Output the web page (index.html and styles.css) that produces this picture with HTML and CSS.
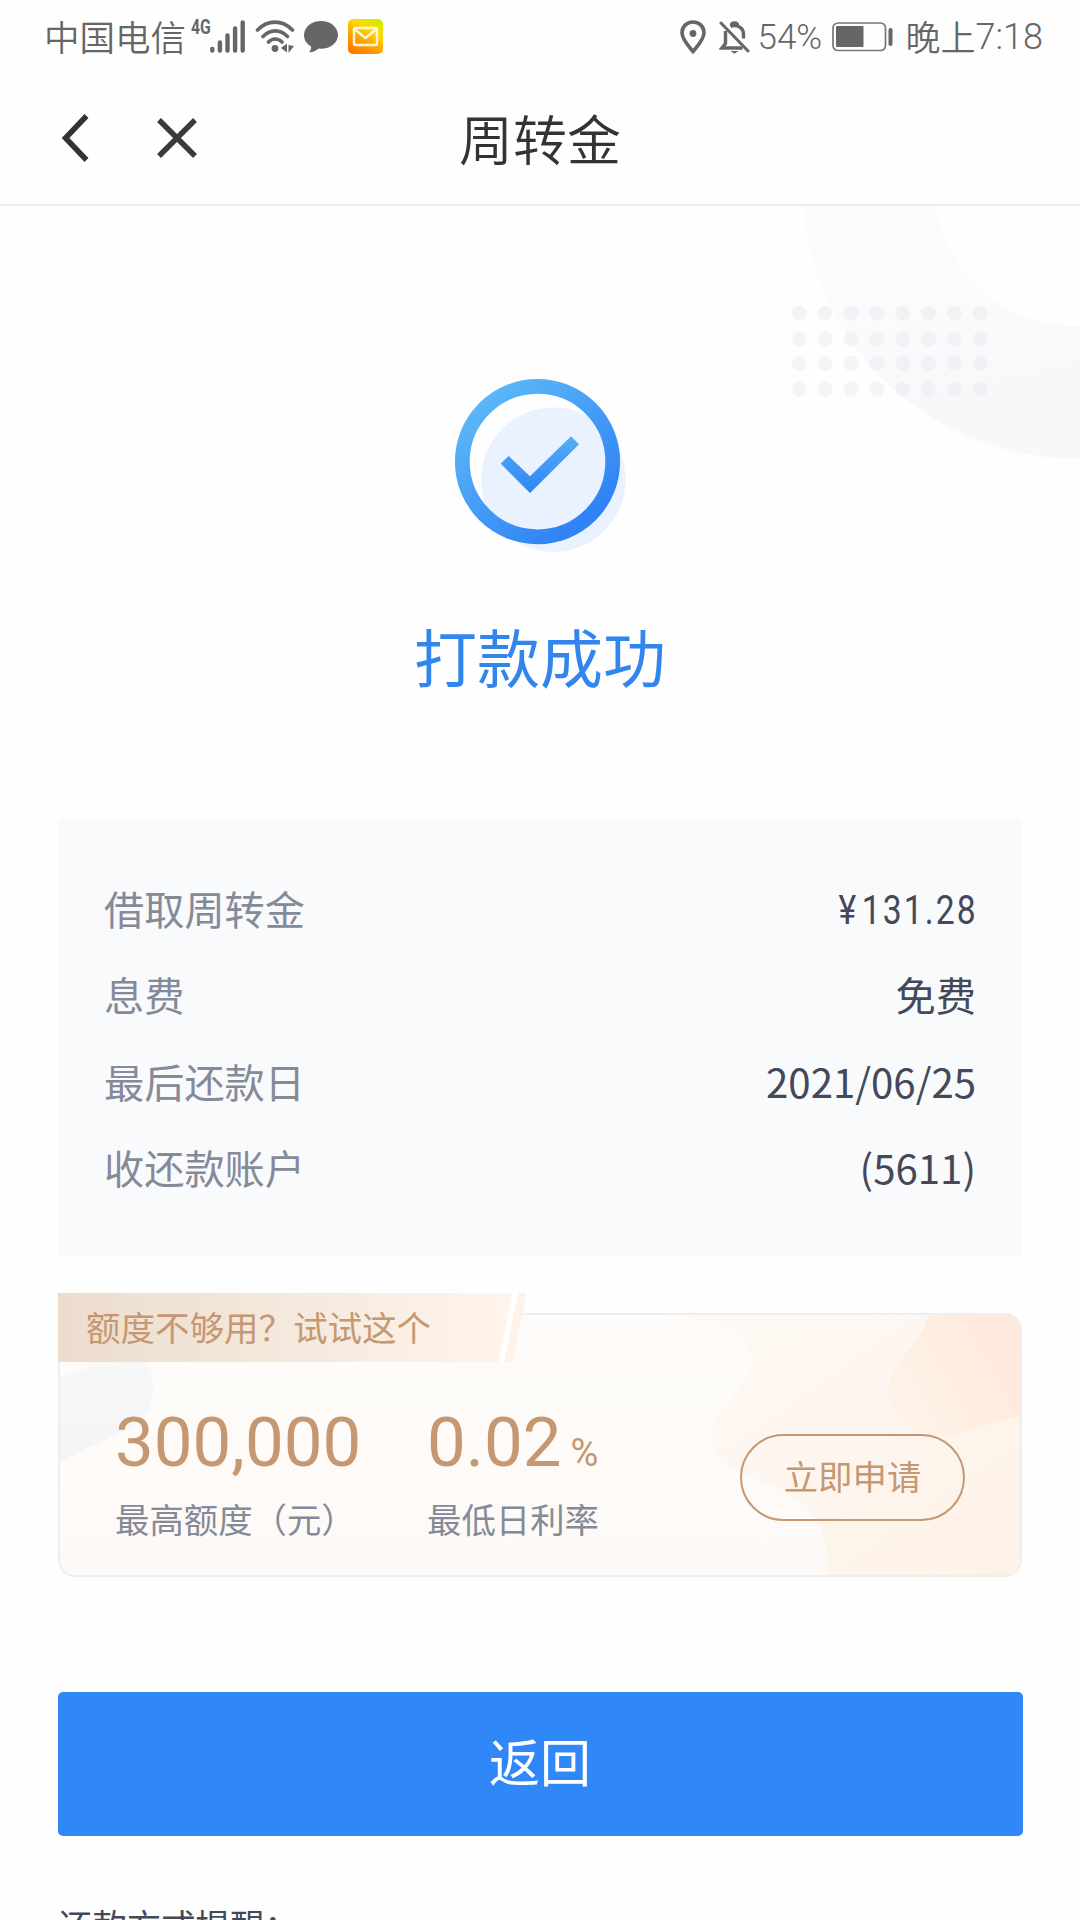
FILE: index.html
```html
<!DOCTYPE html>
<html lang="zh-CN">
<head>
<meta charset="utf-8">
<title>周转金</title>
<link rel="stylesheet" href="styles.css">
</head>
<body>
<div class="screen">
  <div class="statusbar">
    <span class="carrier">中国电信</span>
    <span class="net">4G</span>
    <svg class="signal" width="36" height="36" viewBox="0 0 36 36" fill="none" stroke="#666" stroke-width="4.4" stroke-linecap="round"><path d="M2.3 30v1.6M9.9 23.5v8.1M17.5 16.500v15.1M25.100 9.500v22.100M32.700 3.500v28.100"/></svg>
    <svg class="wifi" width="42" height="36" viewBox="0 0 42 36" fill="none" stroke="#666" stroke-width="3.600" stroke-linecap="round"><path d="M2.500 11C13 .5 27 .5 37.500 11M8 17.500c7.500-7.500 17-7.500 24.500 0M13.500 23c4-4 9.500-4 13.500 0"/><circle cx="20" cy="29.500" r="3.400" fill="#666" stroke="none"/><path d="M32 24.500v9l-6-4.500zM33.500 26v8l5.500-7z" fill="#666" stroke="none"/></svg>
    <svg class="bubble" width="34" height="34" viewBox="0 0 34 34" fill="#666"><path d="M17 1c9.400 0 17 6.200 17 14s-7.600 13.800-17 13.800l-2.500-.2C12 31 8.500 32.500 5 32.300c1.600-1.500 2.200-3.600 2-5.800C2.700 24 0 20 0 15 0 7.200 7.600 1 17 1z"/></svg>
    <span class="mail"><svg width="35" height="35" viewBox="0 0 35 35" fill="none" stroke="#fff8d8" stroke-width="2.400" stroke-linejoin="round"><rect x="6" y="9" width="23" height="17" rx="1.500"/><path d="M7 10.500l10.500 8.500 10.500-8.500"/></svg></span>
    <span class="spacer"></span>
    <svg class="pin" width="26" height="34" viewBox="0 0 26 34"><path d="M13 2C6.500 2 2 6.700 2 12.800 2 19.500 8.500 26 13 31.500c4.500-5.500 11-12 11-18.700C24 6.700 19.500 2 13 2z" fill="none" stroke="#666" stroke-width="3.600"/><circle cx="13" cy="13.500" r="3.400" fill="#666"/></svg>
    <svg class="bell" width="32" height="34" viewBox="0 0 32 34" fill="none" stroke="#666" stroke-width="3"><path d="M2 3l27 28" stroke-linecap="round"/><path d="M6.500 11v12.500L3 28h20.500M11.500 6.500C13 5.500 18 5 20.500 7c4 2.500 4 5 4 9.500v2" stroke-width="3.400"/><path d="M12.500 5c.2-2.800 5.800-2.800 6 0" stroke-width="3.400"/><path d="M11.500 31h8l-4 2.800z" fill="#666" stroke="none"/></svg>
    <span class="percent">54%</span>
    <svg class="battery" width="62" height="30" viewBox="0 0 62 30"><rect x="1" y="1" width="52.500" height="27.500" rx="5" fill="none" stroke="#777" stroke-width="1.700"/><rect x="4" y="4" width="27.500" height="21" rx="1" fill="#666"/><rect x="56.500" y="6" width="4" height="18" rx="2" fill="#666"/></svg>
    <span class="clock"><span class="ampm">晚上</span>7:18</span>
  </div>

  <header class="navbar">
    <svg width="30" height="50" viewBox="0 0 30 50" fill="none" stroke="#333" stroke-width="5.500"><path d="M26.500 3L5.500 25l21 22"/></svg>
    <svg class="close" width="42" height="42" viewBox="0 0 42 42" fill="none" stroke="#3a3a3a" stroke-width="5.500"><path d="M3 3l36 36M39 3L3 39"/></svg>
    <h1 class="nav-title">周转金</h1>
  </header>

  <main class="content">
    <svg class="decor" width="320" height="256" viewBox="0 0 320 256">
      <defs>
        <linearGradient id="ringFade" x1="0" y1="0" x2=".25" y2="1"><stop offset=".45" stop-color="#fbfcfc"/><stop offset=".75" stop-color="#fafbfc"/><stop offset="1" stop-color="#f7f8fa"/></linearGradient>
        <pattern id="dotRow" x="31.800" y="0" width="25.860" height="15" patternUnits="userSpaceOnUse"><circle cx="7.500" cy="7.500" r="7.400" fill="#e8ebef" fill-opacity=".55"/></pattern>
      </defs>
      <circle cx="316" cy="-21.300" r="207.800" fill="none" stroke="url(#ringFade)" stroke-width="132.500"/>
      <g>
        <rect x="31.800" width="207" height="15" fill="url(#dotRow)" transform="translate(0 99.800)"/>
        <rect x="31.800" width="207" height="15" fill="url(#dotRow)" transform="translate(0 125.500)"/>
        <rect x="31.800" width="207" height="15" fill="url(#dotRow)" transform="translate(0 150)"/>
        <rect x="31.800" width="207" height="15" fill="url(#dotRow)" transform="translate(0 175.800)"/>
      </g>
    </svg>

    <section class="result">
      <svg width="172" height="174" viewBox="0 0 172 174">
        <defs>
          <linearGradient id="ring" x1=".15" y1=".1" x2=".8" y2=".9"><stop offset="0" stop-color="#5ab6f8"/><stop offset="1" stop-color="#2f83f4"/></linearGradient>
          <linearGradient id="tick" x1="0" y1="0" x2="0" y2="1"><stop offset="0" stop-color="#55b0f7"/><stop offset="1" stop-color="#2f83f4"/></linearGradient>
        </defs>
        <circle cx="99.300" cy="101.600" r="72.200" fill="#e9f2fe"/>
        <circle cx="83.500" cy="83.600" r="75.200" fill="none" stroke="url(#ring)" stroke-width="14.800"/>
        <path d="M46.700 85.600l8-7.700L76 98.300l41-40 8 8-49 48.700z" fill="url(#tick)"/>
      </svg>
      <h2 class="result-title">打款成功</h2>
    </section>

    <dl class="details">
      <div class="row"><dt>借取周转金</dt><dd class="amount"><span class="yen">¥</span>131.28</dd></div>
      <div class="row"><dt>息费</dt><dd>免费</dd></div>
      <div class="row"><dt>最后还款日</dt><dd>2021/06/25</dd></div>
      <div class="row"><dt>收还款账户</dt><dd>(5611)</dd></div>
    </dl>

    <section class="promo">
      <div class="promo-card">
        <svg class="promo-art" width="964" height="263" viewBox="0 0 964 263">
          <defs>
            <linearGradient id="wave" x1="0" y1="0" x2="1" y2="1"><stop offset="0" stop-color="#fefaf6"/><stop offset=".45" stop-color="#fef6f0"/><stop offset="1" stop-color="#fdf2e7"/></linearGradient>
            <linearGradient id="peach" x1="0" y1=".7" x2="1" y2=".2"><stop offset="0" stop-color="#fef3e8"/><stop offset="1" stop-color="#fee8da"/></linearGradient>
            <linearGradient id="mist" x1="0" y1="0" x2="0" y2="1"><stop offset="0" stop-color="#f9f8f8"/><stop offset="1" stop-color="#f4f4f7"/></linearGradient>
          </defs>
          <path d="M590 0C630 5 658 9 675 21C690 31 695 42 692 54C688 77 665 88 656 107C649 128 655 147 675 157C698 169 735 176 753 199C768 219 771 240 769 263H964V0z" fill="url(#wave)"/>
          <path d="M870 0C867 28 839 43 832 67C824 96 845 114 867 120C900 130 928 107 964 104V0z" fill="url(#peach)"/>
          <path d="M0 63C20 62 34 54 43 40H80C93 50 96 66 95 79C94 98 85 107 67 118C43 130 17 139 0 152z" fill="url(#mist)"/>
        </svg>
        <div class="stat stat-limit">
          <span class="figure">300,000</span>
          <span class="caption">最高额度（元）</span>
        </div>
        <div class="stat stat-rate">
          <span class="figure">0.02<small>%</small></span>
          <span class="caption">最低日利率</span>
        </div>
        <button class="apply">立即申请</button>
      </div>
      <div class="ribbon">
        <svg class="ribbon-shape" width="470" height="69" viewBox="0 0 470 69">
          <defs><linearGradient id="sand"><stop offset="0" stop-color="#ebdccd"/><stop offset="1" stop-color="#fff5ec"/></linearGradient></defs>
          <path d="M454 0h6l-13 69h-7z" fill="#fff"/>
          <path d="M0 0h454.500L441 69H0z" fill="url(#sand)"/>
          <path d="M460 0h8.500L455 69h-9z" fill="#fef3ea"/>
        </svg>
        <span class="ribbon-text">额度不够用？试试这个</span>
      </div>
    </section>

    <button class="back-btn">返回</button>
    <p class="note">还款方式提醒：</p>
  </main>
</div>
</body>
</html>
```
FILE: styles.css
```css
* { box-sizing: border-box; margin: 0; padding: 0; }

body {
  background: #fefefe;
  font-family: "Noto Sans CJK SC", sans-serif;
  color: #434959;
}

button { font-family: inherit; cursor: pointer; }
svg { display: block; flex: none; }

.screen {
  width: 1080px;
  height: 1920px;
  overflow: hidden;
  display: flex;
  flex-direction: column;
}

/* Status bar */
.statusbar {
  height: 72px;
  flex: none;
  display: flex;
  align-items: flex-start;
  padding: 19px 37px 0 44px;
  color: #666;
  font-size: 36px;
  font-weight: 350;
  line-height: 34px;
}
.carrier { width: 147px; font-size: 35.500px; }
.net {
  width: 19px;
  font: 700 21px/16px "Roboto", sans-serif;
  transform: scaleX(.75);
  transform-origin: left;
}
.signal { margin-right: 9px; }
.wifi { margin-right: 7px; }
.bubble { margin: 1px 10px 0 0; }
.mail {
  border-radius: 5px;
  background: linear-gradient(30deg, #ff6a00, #ffb400 50%, #ffd800 65%, #c8f000);
}
.spacer { flex: 1; }
.pin { margin: 1px 13px 0 0; }
.bell { margin: 1px 7px 0 0; }
.percent {
  width: 74px;
  font-family: "Roboto", sans-serif;
  font-size: 35px;
  line-height: 37px;
  white-space: nowrap;
}
.battery { margin: 3px 12px 0 0; }
.clock {
  display: flex;
  font-family: "Roboto", sans-serif;
  line-height: 37px;
}
.ampm {
  font-family: "Noto Sans CJK SC", sans-serif;
  font-size: 35px;
  line-height: 34px;
}

/* Navigation */
.navbar {
  position: relative;
  height: 134px;
  flex: none;
  display: flex;
  align-items: center;
  padding: 0 60px;
  border-bottom: 2px solid #ebedee;
}
.close { margin-left: 66px; }
.nav-title {
  position: absolute;
  inset: 0;
  text-align: center;
  font-size: 54px;
  font-weight: 350;
  line-height: 132px;
  color: #333;
}

/* Content */
.content {
  position: relative;
  flex: 1;
  padding: 0 58px;
}
.decor {
  position: absolute;
  top: 0;
  right: 0;
}
.result {
  position: relative;
  height: 613px;
  display: flex;
  flex-direction: column;
  align-items: center;
  padding-top: 172px;
}
.result-title {
  margin-top: 58px;
  font-size: 63px;
  font-weight: 400;
  line-height: 90px;
  color: #3385ee;
}

.details {
  height: 437px;
  padding: 45px 46px 0 46px;
  background: #f9fafc;
}
.row {
  height: 86.500px;
  display: flex;
  justify-content: space-between;
  align-items: center;
  font-size: 40.200px;
}
.row dt { color: #858a99; }
.amount {
  font-family: "Roboto", sans-serif;
  font-size: 41px;
  letter-spacing: 2.600px;
  margin-right: -2px;
  padding-top: 6px;
  transform: scaleX(.82);
  transform-origin: right;
}
.yen { margin-right: 4px; }

.promo {
  position: relative;
  padding-top: 57px;
}
.promo-card {
  position: relative;
  height: 264px;
  display: flex;
  align-items: flex-start;
  padding-left: 55px;
  border: 2px solid #efeeec;
  border-radius: 17px;
  overflow: hidden;
  background: linear-gradient(#fefcfa, #fdf9f6);
}
.promo-art {
  position: absolute;
  top: -2px;
  left: -2px;
}
.stat {
  position: relative;
  display: flex;
  flex-direction: column;
  padding-top: 88px;
}
.stat-limit { width: 312px; }
.stat-rate { width: 313px; }
.figure {
  height: 80px;
  font-family: "Roboto", sans-serif;
  font-size: 69px;
  line-height: 80px;
  color: #c59872;
}
.figure small { margin-left: 9px; font-size: 38px; font-weight: 400; line-height: 1; }
.caption {
  margin-top: 12px;
  font-size: 34.400px;
  line-height: 46px;
  color: #858a99;
  white-space: nowrap;
}
.apply {
  position: relative;
  width: 225px;
  height: 87px;
  margin-top: 119px;
  border: 2px solid #c59872;
  border-radius: 44px;
  background: none;
  color: #c59872;
  font-size: 34.400px;
  line-height: 78px;
  padding-bottom: 5px;
}
.ribbon {
  position: absolute;
  top: 37px;
  left: 0;
  width: 470px;
  height: 69px;
}
.ribbon-text {
  position: absolute;
  left: 28px;
  top: 0;
  font-size: 34.500px;
  line-height: 66px;
  color: #c59872;
  white-space: nowrap;
}

.back-btn {
  display: block;
  width: 965px;
  height: 144px;
  margin-top: 115px;
  border: 0;
  border-radius: 5px;
  background: #2f87f8;
  color: #fff;
  font-size: 51px;
  padding: 0 1px 9px 0;
}
.note {
  margin-top: 63px;
  font-size: 34.400px;
  line-height: 50px;
}
```
